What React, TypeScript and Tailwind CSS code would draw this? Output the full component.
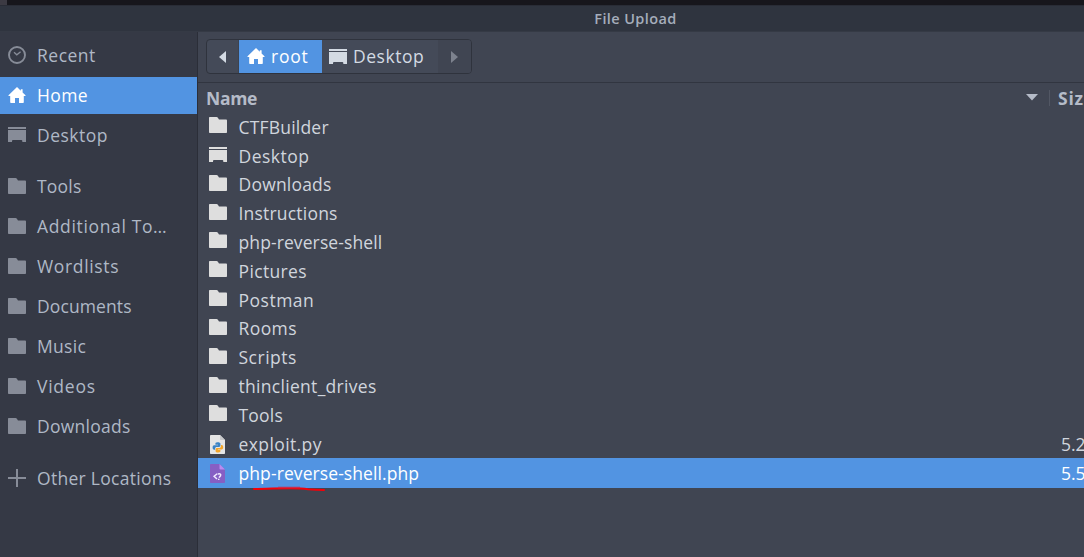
import React from "react";

type IconProps = { className?: string };

const Folder = ({ className = "" }: IconProps) => (
  <svg className={`h-4 w-[18px] shrink-0 ${className}`} viewBox="0 0 18 16" fill="currentColor">
    <path d="M.7 0H7.6c.5 0 .8.2 1.1.6L10 2.6h7.2c.5 0 .8.3.8.8V15.2c0 .5-.3.8-.8.8H.8c-.5 0-.8-.3-.8-.8V.8C0 .3.3 0 .7 0Z" />
  </svg>
);

const DesktopIcon = ({ className = "" }: IconProps) => (
  <svg className={`h-[15px] w-[18px] shrink-0 ${className}`} viewBox="0 0 18 15" fill="currentColor">
    <path d="M0 0H18V2H0ZM0 3H18V15H14.3V14Q14.3 13 13.3 13H5Q4 13 4 14V15H0Z" />
  </svg>
);

const HomeIcon = ({ className = "" }: IconProps) => (
  <svg className={`h-4 w-[18px] shrink-0 ${className}`} viewBox="0 0 18 16" fill="currentColor">
    <path d="M9 0 12.8 3.7V2.2H14.6V5.5L17.5 8.3V9H15.8V15.2Q15.8 16 15 16H11V11H7V16H3Q2.2 16 2.2 15.2V9H.5V8.3Z" />
  </svg>
);

const Clock = ({ className = "" }: IconProps) => (
  <svg className={`size-[18px] shrink-0 ${className}`} viewBox="0 0 18 18" fill="none" stroke="currentColor">
    <circle cx="9" cy="9" r="8" strokeWidth="1.9" />
    <path d="M6 6.3 8.8 8.8 12.6 5.7" strokeWidth="1.3" />
  </svg>
);

const Plus = ({ className = "" }: IconProps) => (
  <svg className={`size-[18px] shrink-0 ${className}`} viewBox="0 0 18 18" fill="currentColor">
    <path d="M8 0H10V8H18V10H10V18H8V10H0V8H8Z" />
  </svg>
);

const PythonFile = () => (
  <svg className="h-[19px] w-[18px] shrink-0" viewBox="0 0 18 19">
    <path d="M1.8 0H11l5 5v13.2q0 .8-.8.8H1.8Q1 19 1 18.200V.8Q1 0 1.800 0Z" fill="#e5e5e5" />
    <path d="M11 0v4.200q0 .8.8.8H16Z" fill="#c8c9cc" />
    <path d="M8.500 7.200c-2 0-2.100.8-2.100 1.500v1H9v.6H5.100c-1 0-1.500.9-1.500 2.200 0 1.400.6 2.200 1.500 2.200h1v-1.300c0-.9.7-1.500 1.500-1.500h2.500c.7 0 1.300-.6 1.300-1.300V8.700c0-1-1-1.500-2.900-1.500Z" fill="#3b83c4" />
    <path d="M9.300 17.600c2 0 2.100-.8 2.100-1.500v-1H8.900v-.6h3.800c1 0 1.500-.9 1.500-2.200 0-1.400-.6-2.200-1.500-2.200h-.8v1.300c0 .9-.7 1.500-1.500 1.500H8c-.8 0-1.400.6-1.400 1.300v1.900c0 1 1 1.500 2.700 1.500Z" fill="#f4a62a" />
  </svg>
);

const PhpFile = () => (
  <svg className="h-[19px] w-[18px] shrink-0" viewBox="0 0 18 19">
    <path d="M1.8 0H10.500L16 5.500V18.200Q16 19 15.200 19H1.800Q1 19 1 18.200V.8Q1 0 1.800 0Z" fill="#865fc4" />
    <path d="M10.500 0V4.700q0 .8.8.8H16Z" fill="#b98cf0" />
    <path d="M8.200 9.700 5.100 12.300 8 15" fill="none" stroke="#f1eaff" strokeWidth="1.500" />
    <path d="M8.800 10.300q1-.9 2.200-.4 1.200.7.500 1.900-.8.900-1.500 1.800M9.700 14.700v1.300" fill="none" stroke="#f1eaff" strokeWidth="1.500" />
  </svg>
);

type Place = { name: string; icon: React.FC<IconProps>; track: string; active?: boolean };

const places: Place[][] = [
  [
    { name: "Recent", icon: Clock, track: "tracking-[0.5px]" },
    { name: "Home", icon: HomeIcon, track: "tracking-[0.4px]", active: true },
    { name: "Desktop", icon: DesktopIcon, track: "tracking-[0.5px]" },
  ],
  [
    { name: "Tools", icon: Folder, track: "tracking-[0.2px]" },
    { name: "Additional To…", icon: Folder, track: "tracking-[0.65px]" },
    { name: "Wordlists", icon: Folder, track: "tracking-[0.65px]" },
    { name: "Documents", icon: Folder, track: "tracking-[0.1px]" },
    { name: "Music", icon: Folder, track: "tracking-[0.3px]" },
    { name: "Videos", icon: Folder, track: "tracking-[0.75px]" },
    { name: "Downloads", icon: Folder, track: "tracking-[0.25px]" },
  ],
  [{ name: "Other Locations", icon: Plus, track: "tracking-[0.28px]" }],
];

type Entry = { name: string; icon?: React.FC<IconProps>; track: string; size?: string; selected?: boolean };

const files: Entry[] = [
  { name: "CTFBuilder", track: "tracking-[0.2px]" },
  { name: "Desktop", icon: DesktopIcon, track: "tracking-[0.5px]" },
  { name: "Downloads", track: "tracking-[0.2px]" },
  { name: "Instructions", track: "tracking-[0.2px]" },
  { name: "php-reverse-shell", track: "tracking-[0.1px]" },
  { name: "Pictures", track: "tracking-[0.35px]" },
  { name: "Postman", track: "tracking-[0.5px]" },
  { name: "Rooms", track: "tracking-[0.4px]" },
  { name: "Scripts", track: "tracking-[0.5px]" },
  { name: "thinclient_drives", track: "tracking-[0.3px]" },
  { name: "Tools", track: "tracking-[0.2px]" },
  { name: "exploit.py", icon: PythonFile, track: "tracking-[0.4px]", size: "5.2 kB" },
  { name: "php-reverse-shell.php", icon: PhpFile, track: "tracking-[0.09px]", size: "5.5 kB", selected: true },
];

function Sidebar() {
  return (
    <nav className="flex w-[198px] shrink-0 flex-col gap-[11.500px] border-r border-[#2b2e38] bg-[#353945] pt-[3px]">
      {places.map((group, i) => (
        <ul key={i}>
          {group.map(({ name, icon: Icon, track, active }) => (
            <li key={name} className="h-10 pt-[2px] pb-px">
              <div
                className={`flex h-full items-center gap-[11px] pb-[2px] pl-2 ${
                  active ? "bg-[#5294e2] text-white" : "text-[#afb8c6]"
                }`}
              >
                <Icon className={active ? "text-white" : "text-[#878c98]"} />
                <span className={`whitespace-nowrap ${track}`}>{name}</span>
              </div>
            </li>
          ))}
        </ul>
      ))}
    </nav>
  );
}

function PathBar() {
  return (
    <div className="flex h-[51px] shrink-0 items-start border-b border-[#313540] pt-[7px] pl-2">
      <div className="flex h-[35px] w-[266px] overflow-hidden rounded-[4px] border border-[#2f333d] bg-[#444a58] text-[#d3dae3]">
        <div className="flex w-8 items-center justify-center border-r border-[#3b4351]">
          <svg className="h-3 w-[7px]" viewBox="0 0 7 12" fill="currentColor">
            <path d="M7 0V12L0 6Z" />
          </svg>
        </div>
        <div className="flex w-[83px] items-center gap-[6px] bg-[#5294e2] pb-px pl-2 text-white">
          <HomeIcon />
          <span className="tracking-[0.8px]">root</span>
        </div>
        <div className="flex w-[116px] items-center gap-[6px] pb-px pl-[7px]">
          <DesktopIcon />
          <span className="tracking-[0.55px]">Desktop</span>
        </div>
        <div className="flex flex-1 items-center justify-center bg-[#404552] text-[#7d828e]">
          <svg className="h-3 w-[7px]" viewBox="0 0 7 12" fill="currentColor">
            <path d="M0 0V12L7 6Z" />
          </svg>
        </div>
      </div>
    </div>
  );
}

export default function App() {
  return (
    <div className="flex h-[557px] w-[1084px] flex-col overflow-hidden bg-[#404552] font-['Open_Sans','Noto_Sans',sans-serif] text-[17.5px] leading-6 text-[#d0d5dd]">
      <div className="h-[5px] shrink-0 border-l-[7px] border-[#3c3a43] bg-[#17161c]" />
      <header className="flex h-[27px] shrink-0 items-center justify-center border-t border-b border-t-[#292c36] border-b-[#353a45] bg-[#2f343f] pl-[187px] text-[14.500px] font-semibold tracking-[0.4px] text-[#a5adbb]">
        File Upload
      </header>
      <div className="flex min-h-0 flex-1">
        <Sidebar />
        <main className="flex min-w-0 flex-1 flex-col">
          <PathBar />
          <div className="flex h-[29.300px] shrink-0 items-center pl-2 font-bold text-[#b5bbc8]">
            <span className="flex-1 tracking-[-0.3px]">Name</span>
            <svg className="mr-[11px] h-[7px] w-3" viewBox="0 0 12 7" fill="currentColor">
              <path d="M0 0H12L6 6.500Z" />
            </svg>
            <div className="h-4 w-px bg-[#525764]" />
            <span className="w-[34px] overflow-hidden pl-2 tracking-[0.8px] whitespace-nowrap">Size</span>
          </div>
          <ul>
            {files.map(({ name, icon: Icon = Folder, track, size, selected }) => (
              <li
                key={name}
                className={`relative flex items-center pl-[11px] ${
                  selected ? "h-[30px] bg-[#5294e2] text-white" : "h-[28.820px]"
                }`}
              >
                <div className={`flex w-[29.500px] ${size ? "pt-px" : "pb-[3px]"}`}>
                  <Icon className="text-[#dedede]" />
                </div>
                <span className={`flex-1 whitespace-nowrap ${track}`}>{name}</span>
                {size && <span className="w-[23px] overflow-hidden whitespace-nowrap">{size}</span>}
                {selected && (
                  <svg className="absolute top-[28px] left-[54px] h-[6px] w-[74px]" viewBox="0 0 74 6" fill="none">
                    <path d="M2 3C20 3 42 1 56 3.200Q64 4 72 4" stroke="#f40009" strokeWidth="2" strokeLinecap="round" />
                    <path d="M26 1.500H48" stroke="#c72c4e" strokeWidth="1.500" />
                  </svg>
                )}
              </li>
            ))}
          </ul>
        </main>
      </div>
    </div>
  );
}
